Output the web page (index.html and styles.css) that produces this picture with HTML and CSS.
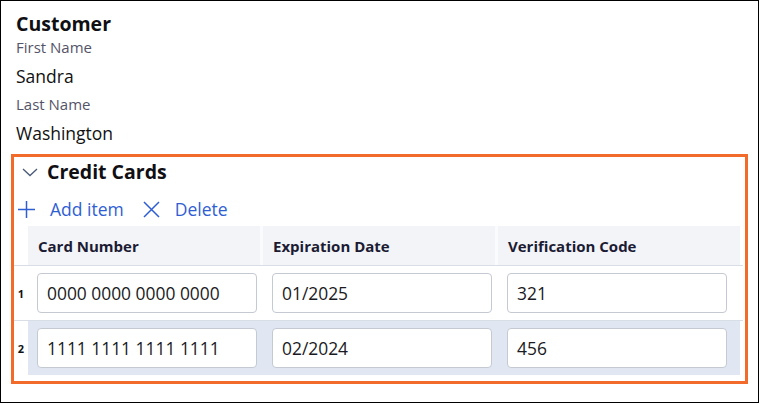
FILE: index.html
```html
<!DOCTYPE html>
<html>
<head>
<meta charset="utf-8">
<link rel="stylesheet" href="styles.css">
</head>
<body>
<div class="page">
  <div class="customer">
    <h1 class="title">Customer</h1>
    <div class="field">
      <div class="label">First Name</div>
      <div class="value">Sandra</div>
    </div>
    <div class="field">
      <div class="label">Last Name</div>
      <div class="value">Washington</div>
    </div>
  </div>
  <section class="cards">
    <div class="cards-head">
      <svg class="chev" width="16" height="9" viewBox="0 0 16 9"><path d="M1 1 L8 7.5 L15 1" fill="none" stroke="#4a5a78" stroke-width="1.3"/></svg>
      <h2 class="cards-title">Credit Cards</h2>
    </div>
    <div class="actions">
      <button class="act"><svg width="19" height="19" viewBox="0 0 19 19"><path d="M9.5 1 V18 M1 9.5 H18" stroke="#2f5ed3" stroke-width="1.5" fill="none"/></svg><span>Add item</span></button>
      <button class="act"><svg width="19" height="19" viewBox="0 0 19 19"><path d="M2 2 L17 17 M17 2 L2 17" stroke="#2f5ed3" stroke-width="1.5" fill="none"/></svg><span>Delete</span></button>
    </div>
    <div class="table">
      <div class="row head">
        <div class="num"></div>
        <div class="cell th">Card Number</div>
        <div class="cell th">Expiration Date</div>
        <div class="cell th last">Verification Code</div>
      </div>
      <div class="row">
        <div class="num">1</div>
        <div class="cell"><div class="input">0000 0000 0000 0000</div></div>
        <div class="cell"><div class="input">01/2025</div></div>
        <div class="cell last"><div class="input">321</div></div>
      </div>
      <div class="row sel">
        <div class="num">2</div>
        <div class="cell"><div class="input">1111 1111 1111 1111</div></div>
        <div class="cell"><div class="input">02/2024</div></div>
        <div class="cell last"><div class="input">456</div></div>
      </div>
    </div>
  </section>
</div>
</body>
</html>
```
FILE: styles.css
```css
* { box-sizing: border-box; }
html, body { margin: 0; padding: 0; background: #fff; }
body { font-family: "Open Sans", "Noto Sans", sans-serif; color: #1f1f24; }
.page {
  width: 759px;
  height: 403px;
  border: 1px solid #000;
  padding: 0 10px;
}
.customer { padding: 10px 5px 0; }
.title { margin: 0; font-size: 19.5px; font-weight: 700; line-height: 25px; color: #0f0f14; }
.field { display: flex; flex-direction: column; }
.label { font-size: 15px; line-height: 20px; color: #545468; margin-top: 1px; }
.value { font-size: 17.5px; line-height: 24px; margin-top: 7px; margin-bottom: 5px; color: #111; }
.cards {
  margin-top: 4px;
  border: 3px solid #f26b2b;
  height: 230px;
  padding: 0 2px 0 0;
}
.cards-head { display: flex; align-items: center; height: 28px; padding-left: 8px; margin-top: 1px; }
.chev { margin-right: 9px; margin-top: 1px; }
.cards-title { margin: 0; font-size: 19.5px; font-weight: 700; color: #0f0f14; line-height: 28px; }
.actions { display: flex; align-items: flex-start; height: 40px; padding-top: 12px; padding-left: 3px; }
.act {
  display: flex; align-items: center; gap: 14px;
  border: 0; background: none; padding: 0; margin-right: 18px;
  font-family: inherit; font-size: 17.5px; color: #2f5ed3; line-height: 22px;
}
.table { display: flex; flex-direction: column; }
.row { display: flex; border-top: 1px solid #d9dde5; }
.row.head { border-top: 0; height: 39px; }
.num { width: 14px; flex: none; font-size: 11px; font-weight: 700; display: flex; align-items: center; justify-content: center; color: #111; }
.cell { width: 235px; flex: none; display: flex; align-items: center; padding-left: 9px; }
.cell.last { width: 242px; }
.th {
  background: #f3f4f8;
  font-size: 15px; font-weight: 700; color: #1b1b33;
  border-right: 3px solid #fafbfc;
  padding-left: 10px;
}
.th.last { border-right: 0; }
.row:not(.head) { height: 55px; }
.row.sel .cell { background: #e0e6f2; }
.input {
  width: 220px; height: 40px;
  border: 1px solid #c4c9d2; border-radius: 4px;
  background: #fff;
  font-size: 17.4px; color: #1a1a22;
  display: flex; align-items: center; padding-left: 9px;
}
```
